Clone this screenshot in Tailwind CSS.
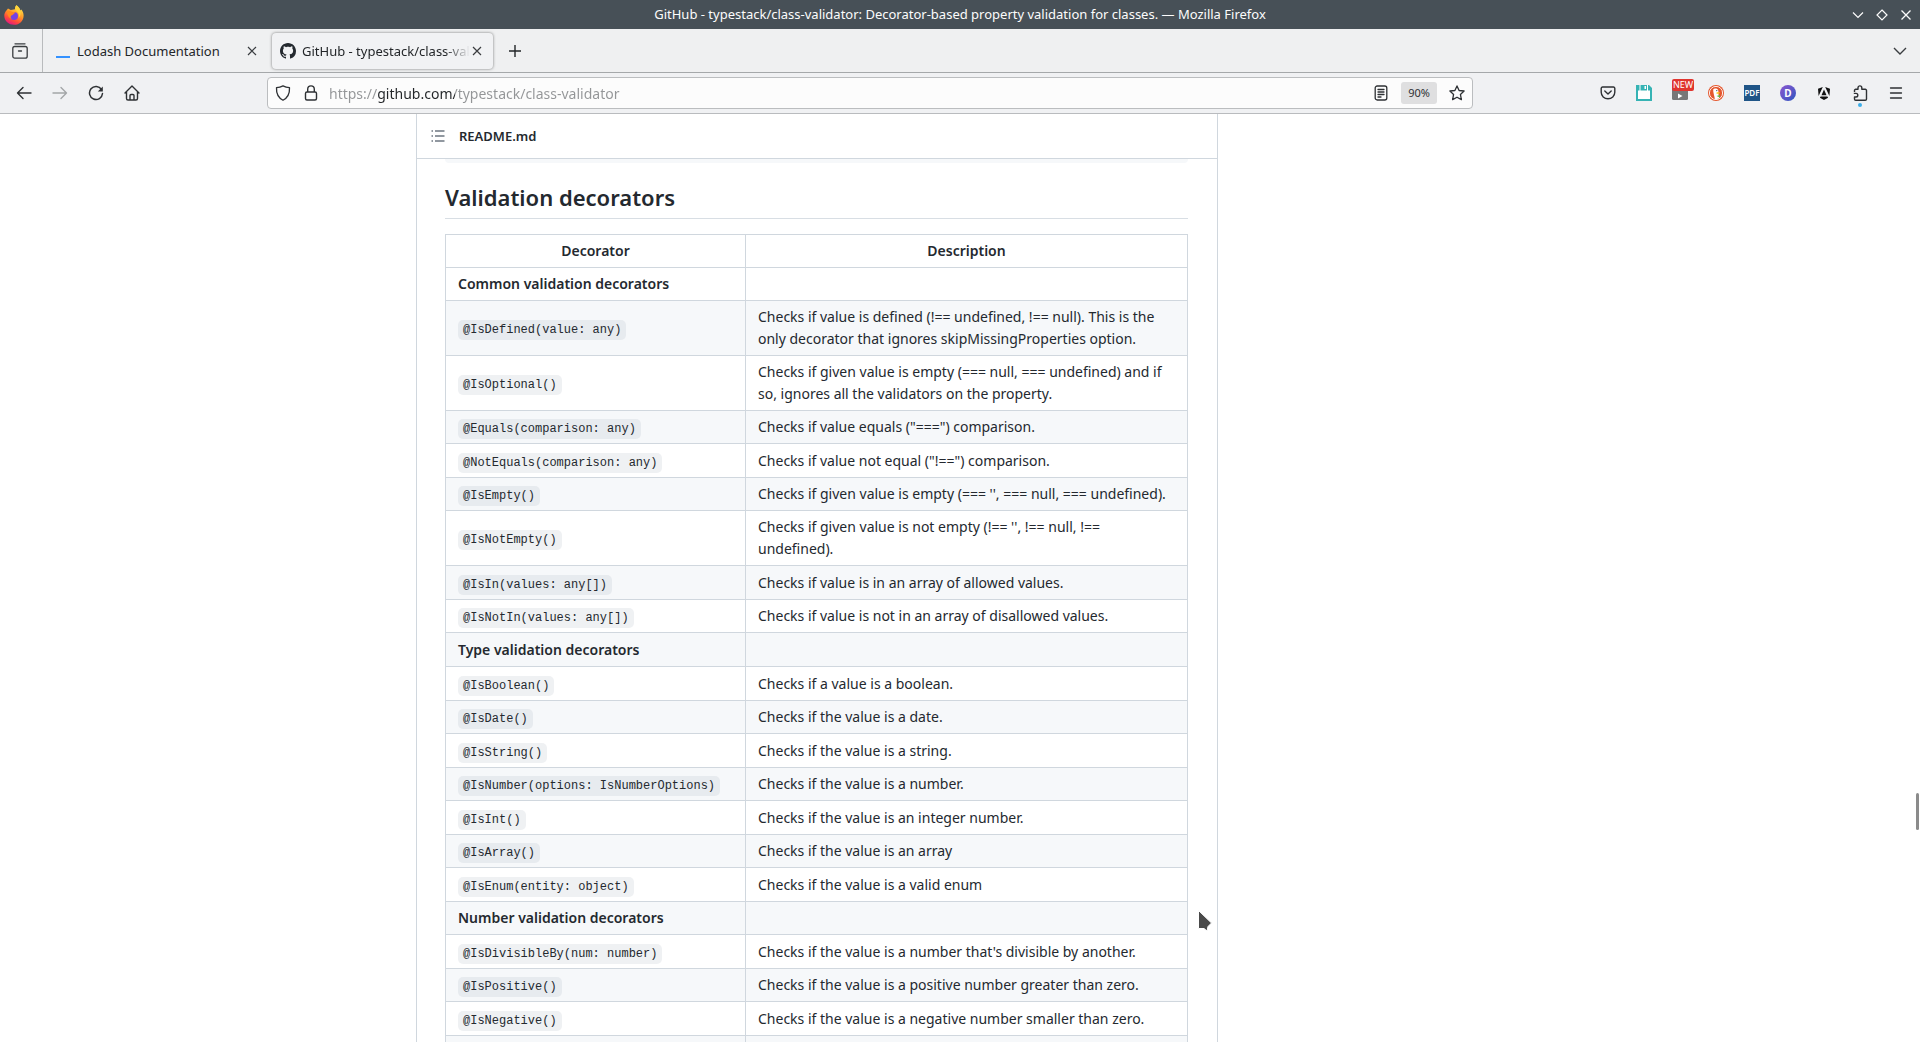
<!DOCTYPE html>
<html lang="en">
<head>
<meta charset="utf-8">
<title>GitHub - typestack/class-validator: Decorator-based property validation for classes.</title>
<script src="https://cdn.jsdelivr.net/npm/@tailwindcss/browser@4"></script>
</head>
<body class="h-screen overflow-hidden flex flex-col bg-white text-[#24292f] font-['Noto_Sans',sans-serif]">
<header class="shrink-0">
  <!-- window title bar -->
  <div class="h-[29px] bg-[#475057] text-[#fcfcfc] grid grid-cols-[1fr_auto_1fr] items-center px-1">
    <svg class="size-5" viewBox="0 0 20 20" aria-label="Firefox">
      <defs><linearGradient id="ff" x1=".8" y1="0" x2=".3" y2="1"><stop offset="0" stop-color="#fff44f"/><stop offset=".45" stop-color="#ff9a2a"/><stop offset=".75" stop-color="#ff4a3a"/><stop offset="1" stop-color="#e31587"/></linearGradient></defs>
      <path d="M12.400.2c-1 1-1.600 2.600-1.400 4L6.800 5 4 3.600 2.400 5.400C.9 7 .2 9 .3 11c.2 5 4.400 8.800 9.700 8.800 5.600 0 9.600-4.200 9.600-9.400 0-2.500-.9-4.400-2.300-6l-.8 1C15.600 2.600 14 1.200 12.400.2z" fill="url(#ff)"/>
      <circle cx="10" cy="11" r="4" fill="#7542e5"/><path d="M3 6c2-.8 4 .2 5.500 1.200 1.200-.5 2.600-.2 3.500.6-1.200 0-2 .6-2.600 1.500-.7 1-2 .8-2.600 1.900-.5 1 .3 2.200 1 2.800-2.800-.7-4.800-4-4.800-8z" fill="#ff8a1e"/><path d="M12.400.2c-1.500 2-1.800 4 .5 6 2 1.900 2.700 4 1.600 6.800 3-3 3.500-8.400-2.100-12.800z" fill="#ffd43a"/>
    </svg>
    <h1 class="text-[13px]">GitHub - typestack/class-validator: Decorator-based property validation for classes. — Mozilla Firefox</h1>
    <div class="flex justify-end gap-2 pr-[2px]">
      <button aria-label="Minimize"><svg class="size-4" viewBox="0 0 16 16" fill="none" stroke="currentColor" stroke-width="1.200"><path d="M3 5.500l5 5 5-5"/></svg></button>
      <button aria-label="Maximize"><svg class="size-4" viewBox="0 0 16 16" fill="none" stroke="currentColor" stroke-width="1.200"><path d="M8 3l5 5-5 5-5-5z"/></svg></button>
      <button aria-label="Close"><svg class="size-4" viewBox="0 0 16 16" fill="none" stroke="currentColor" stroke-width="1.300"><path d="M3.500 3.500l9 9M12.500 3.500l-9 9"/></svg></button>
    </div>
  </div>
  <!-- tab strip -->
  <div class="h-11 bg-[#eff0f1] border-b border-[#a5a8aa] flex items-center text-[#232629] text-[13px]">
    <button class="h-full w-[43px] shrink-0 border-r border-[#b9bbbd] pl-3" aria-label="Recent browsing"><svg class="size-4" viewBox="0 0 16 16" fill="none" stroke="#3a3d40" stroke-width="1.300" stroke-linecap="round"><path d="M3 .8h10"/><rect x=".8" y="3.500" width="14.400" height="11.700" rx="2"/><path d="M6.500 8h3"/></svg></button>
    <div class="w-[229px] shrink-0 flex items-center pl-[13px]">
      <span class="mt-3 w-[14px] h-[2px] bg-[#3492ff]"></span>
      <span class="ml-[7px] pt-[2px] flex-1">Lodash Documentation</span>
      <button class="mr-[14px]" aria-label="Close tab"><svg class="size-3" viewBox="0 0 12 12" fill="none" stroke="#3a3d40" stroke-width="1.200"><path d="M2 2l8 8M10 2l-8 8"/></svg></button>
    </div>
    <div class="w-[221px] h-9 shrink-0 flex items-center rounded bg-[#f1f2f4] shadow-[0_0_3px_rgba(0,0,0,0.5)] pl-2">
      <svg class="size-4 shrink-0" viewBox="0 0 16 16" fill="#24292f"><path d="M8 0C3.580 0 0 3.580 0 8c0 3.540 2.290 6.530 5.470 7.590.4.070.55-.17.550-.38 0-.19-.01-.82-.01-1.490-2.010.37-2.530-.49-2.690-.94-.09-.23-.48-.94-.82-1.130-.28-.15-.68-.52-.01-.53.63-.01 1.080.58 1.230.82.72 1.210 1.870.87 2.330.66.070-.52.280-.87.510-1.070-1.780-.2-3.640-.89-3.640-3.950 0-.87.310-1.590.82-2.150-.08-.2-.36-1.020.08-2.120 0 0 .67-.21 2.200.82.640-.18 1.320-.27 2-.27s1.360.09 2 .27c1.530-1.040 2.200-.82 2.200-.82.440 1.100.16 1.920.08 2.120.51.560.82 1.270.82 2.150 0 3.070-1.870 3.750-3.650 3.950.29.250.54.730.54 1.480 0 1.070-.01 1.930-.01 2.200 0 .21.150.46.550.38A8.010 8.010 0 0016 8c0-4.420-3.580-8-8-8z"/></svg>
      <span class="ml-[6px] pt-[2px] w-[168px] overflow-hidden whitespace-nowrap mask-r-from-85% mask-r-to-100%">GitHub - typestack/class-validator</span>
      <button class="ml-px" aria-label="Close tab"><svg class="size-3" viewBox="0 0 12 12" fill="none" stroke="#3a3d40" stroke-width="1.200"><path d="M2 2l8 8M10 2l-8 8"/></svg></button>
    </div>
    <button class="ml-[14px]" aria-label="New tab"><svg class="size-4" viewBox="0 0 16 16" fill="none" stroke="#232629" stroke-width="1.400"><path d="M8 2v12M2 8h12"/></svg></button>
    <button class="ml-auto mr-3" aria-label="List all tabs"><svg class="size-4" viewBox="0 0 16 16" fill="none" stroke="#3a3d40" stroke-width="1.400"><path d="M2 5l6 6 6-6"/></svg></button>
  </div>
  <!-- navigation toolbar -->
  <div class="h-[41px] bg-[#f0f1f3] border-b border-[#b9bbbe] flex items-center text-[#2e3134] pl-[6px] pr-[6px]">
    <nav class="flex w-[261px] shrink-0">
      <button class="w-9 flex justify-center" aria-label="Back"><svg class="size-4" viewBox="0 0 16 16" fill="none" stroke="currentColor" stroke-width="1.400" stroke-linecap="round" stroke-linejoin="round"><path d="M15 8H1.500M7 2.500L1.500 8 7 13.500"/></svg></button>
      <button class="w-9 flex justify-center text-[#a3a6a8]" aria-label="Forward" disabled><svg class="size-4" viewBox="0 0 16 16" fill="none" stroke="currentColor" stroke-width="1.400" stroke-linecap="round" stroke-linejoin="round"><path d="M1 8h13.500M9 2.500L14.500 8 9 13.500"/></svg></button>
      <button class="w-9 flex justify-center" aria-label="Reload"><svg class="size-4" viewBox="0 0 16 16" fill="none" stroke="currentColor" stroke-width="1.500" stroke-linecap="round"><path d="M13.500 4.500A6.500 6.500 0 1 0 14.500 8.500"/><path d="M14.800 1.500v5h-5z" fill="currentColor" stroke="none"/></svg></button>
      <button class="w-9 flex justify-center" aria-label="Home"><svg class="size-4" viewBox="0 0 16 16" fill="none" stroke="currentColor" stroke-width="1.400" stroke-linecap="round" stroke-linejoin="round"><path d="M1 8l7-7 7 7M2.500 7v6.500a1.500 1.500 0 0 0 1.500 1.500h8a1.500 1.500 0 0 0 1.500-1.500V7M6 15v-4.500a1 1 0 0 1 1-1h2a1 1 0 0 1 1 1V15"/></svg></button>
    </nav>
    <div class="h-8 flex-1 max-w-[1206px] flex items-center bg-[#fcfcfc] border border-[#bbbdbf] rounded pl-[7px] pr-[7px]">
      <svg class="size-4" viewBox="0 0 16 16" fill="none" stroke="currentColor" stroke-width="1.300" stroke-linejoin="round"><path d="M8 .8c2 1 4 1.600 6.500 1.900.3 5.800-1.800 10-6.500 12.500C3.300 12.700 1.200 8.500 1.500 2.700 4 2.400 6 1.800 8 .8z"/></svg>
      <svg class="ml-3 size-4" viewBox="0 0 16 16" fill="none" stroke="currentColor" stroke-width="1.400"><rect x="2.500" y="7" width="11" height="8" rx="1.500"/><path d="M4.700 7V4.200a3.300 3.300 0 0 1 6.600 0V7"/></svg>
      <input type="text" aria-label="Address" value="https://github.com/typestack/class-validator" class="ml-[10px] mr-3 flex-1 min-w-0 h-6 text-[14px] outline-none bg-clip-text text-transparent bg-[linear-gradient(90deg,#939597_49px,#232629_49px,#232629_126px,#939597_126px)]">
      <button aria-label="Reader view"><svg class="size-4" viewBox="0 0 16 16" fill="none" stroke="currentColor" stroke-width="1.300" stroke-linecap="round"><rect x="2.200" y="1" width="11.600" height="14" rx="2"/><path d="M5 4.500h6M5 7h6M5 9.500h6M5 12h3"/></svg></button>
      <button class="ml-3 h-[22px] w-9 rounded-[3px] bg-[#dfdfe0] text-[11px]">90%</button>
      <button class="ml-3" aria-label="Bookmark"><svg class="size-4" viewBox="0 0 16 16" fill="none" stroke="currentColor" stroke-width="1.300" stroke-linejoin="round"><path d="M8 .9l2.100 4.600 5 .5-3.700 3.400 1 5.200L8 12.200l-4.400 2.400 1-5.200L.9 6l5-.5z"/></svg></button>
    </div>
    <div class="ml-auto flex shrink-0">
      <button class="w-9 flex justify-center" aria-label="Pocket"><svg class="size-4" viewBox="0 0 16 16" fill="none" stroke="currentColor" stroke-width="1.400" stroke-linecap="round" stroke-linejoin="round"><path d="M2.500 2h11a1.300 1.300 0 0 1 1.300 1.300v4a6.800 6.500 0 0 1-13.600 0v-4A1.300 1.300 0 0 1 2.500 2zM4.800 6L8 9l3.200-3"/></svg></button>
      <button class="w-9 flex justify-center" aria-label="Save"><svg class="size-4" viewBox="0 0 16 16"><path d="M0 0h13l3 3v13H0z" fill="#36b3b4"/><path d="M2 5.500h12V14H2zM3.500 0h1v5.500h-1zM8.500 1H10v3H8.500zM11 0h1v5.500h-1z" fill="#fff"/></svg></button>
      <button class="relative w-9 flex justify-center" aria-label="Video extension, new"><svg class="size-4" viewBox="0 0 16 16"><rect y="2" width="16" height="13" rx="1.500" fill="#777"/><path d="M6 8.500v5l4.500-2.500z" fill="#fff"/></svg><span class="absolute left-[10px] -top-[6px] px-px h-3 rounded-[2px] bg-[#e0352f] text-white text-[9px] leading-3">NEW</span></button>
      <button class="w-9 flex justify-center" aria-label="DuckDuckGo"><svg class="size-4" viewBox="0 0 16 16"><circle cx="8" cy="8" r="8" fill="#e4572e"/><circle cx="8" cy="8" r="6.600" fill="none" stroke="#fff" stroke-width=".9"/><path d="M5.200 4.500C6 3.200 9 3 10 4.800c.6 1.200.4 2.700.4 4l.8 4.400c-1.400.9-3 1-4.400.5C6.500 11 5 7.500 5.200 4.500z" fill="#fff"/><path d="M8.500 7.600c1.500-.5 3-.3 3.500.1-.8.900-2.200 1.200-3.500 1z" fill="#fdc70b"/><path d="M8.500 11l3.500-1v2.500z" fill="#5bb847"/><circle cx="8.800" cy="5.600" r=".6" fill="#234"/></svg></button>
      <button class="w-9 flex justify-center" aria-label="PDF tool"><span class="size-4 bg-[#1f5587] text-white text-[8px] leading-4 font-semibold">PDF</span></button>
      <button class="w-9 flex justify-center" aria-label="D extension"><span class="size-4 rounded-full bg-linear-to-br from-[#8a55cf] to-[#2455c0] text-white text-[10px] leading-4 font-bold">D</span></button>
      <button class="w-9 flex justify-center" aria-label="Angular DevTools"><svg class="size-4" viewBox="0 0 16 16" fill="#111"><path d="M6.800 2L2 3.800l.6 7.200zM9.200 2L14 3.800l-.6 7.200zM8 4.500l2.500 5.800h-5zM4.600 11.500h6.800l.7 1.300L8 15l-4.100-2.200z"/></svg></button>
      <button class="relative w-9 flex justify-center" aria-label="Extensions"><svg class="size-4" viewBox="0 0 16 16" fill="none" stroke="currentColor" stroke-width="1.400" stroke-linejoin="round"><path d="M2.500 7V5.500A1.200 1.200 0 0 1 3.700 4.300H6V2.800a1.900 1.900 0 0 1 3.800 0v1.500h3.500a1.200 1.200 0 0 1 1.200 1.200v8.500a1.200 1.200 0 0 1-1.200 1.200H3.700A1.200 1.200 0 0 1 2.500 14v-2H4a1.800 1.800 0 0 0 0-3.600H1.800"/></svg><span class="absolute left-4 top-[18px] size-1 rounded-full bg-[#3daee9]"></span></button>
      <button class="w-9 flex justify-center" aria-label="Menu"><svg class="size-4" viewBox="0 0 16 16" fill="none" stroke="currentColor" stroke-width="1.300" stroke-linecap="round"><path d="M2.500 3h11M2.500 8h11M2.500 13h11"/></svg></button>
    </div>
  </div>
</header>
<main class="relative flex-1 min-h-0 overflow-hidden">
  <div class="mx-auto max-w-[1152px] px-8 flex gap-[22px]">
    <article class="flex-1 min-w-0 border-x border-[#d0d7de]">
      <div class="h-[45px] border-b border-[#d0d7de] flex items-center pl-[13px]">
        <button aria-label="Table of contents"><svg class="size-4" viewBox="0 0 16 16" fill="none" stroke="#6e7781" stroke-width="1.400"><path d="M5 3h9.500M5 8h9.500M5 13h9.500M1.500 3H3M1.500 8H3M1.500 13H3"/></svg></button>
        <a href="#readme" class="ml-[13px] pt-px text-[13px] font-semibold">README.md</a>
      </div>
      <div class="pl-7 pr-[29px]">
        <div class="h-1 rounded-b-[5px] bg-[#f6f8fa]"></div>
        <h2 id="readme" class="mt-[20px] pb-[7px] border-b border-[#d8dee4] text-[22px] leading-7 font-semibold">Validation decorators</h2>
        <table class="mt-[15px] w-full table-fixed border-collapse text-[14px] leading-[22px] [&_td]:border [&_th]:border [&_td]:border-[#d0d7de] [&_th]:border-[#d0d7de] [&_td]:px-3 [&_td]:py-[5px] [&_th]:px-3 [&_th]:py-[5px] [&_th]:font-semibold [&_tbody_tr:nth-child(even)]:bg-[#f6f8fa] [&_code]:rounded-[5px] [&_code]:bg-[#afb8c1]/20 [&_code]:px-[5px] [&_code]:py-[3px] [&_code]:text-[12px] [&_code]:leading-4 [&_code]:font-['Liberation_Mono',monospace]">
          <colgroup><col class="w-[300px]"><col></colgroup>
          <thead><tr class="h-[33px]"><th>Decorator</th><th>Description</th></tr></thead>
          <tbody>
            <tr class="h-[33px]"><td class="font-semibold">Common validation decorators</td><td></td></tr>
            <tr class="h-[55px]"><td><code>@IsDefined(value: any)</code></td><td>Checks if value is defined (!== undefined, !== null). This is the only decorator that ignores skipMissingProperties option.</td></tr>
            <tr class="h-[55px]"><td><code>@IsOptional()</code></td><td>Checks if given value is empty (=== null, === undefined) and if so, ignores all the validators on the property.</td></tr>
            <tr class="h-[33px]"><td><code>@Equals(comparison: any)</code></td><td>Checks if value equals ("===") comparison.</td></tr>
            <tr class="h-[34px]"><td><code>@NotEquals(comparison: any)</code></td><td>Checks if value not equal ("!==") comparison.</td></tr>
            <tr class="h-[33px]"><td><code>@IsEmpty()</code></td><td>Checks if given value is empty (=== '', === null, === undefined).</td></tr>
            <tr class="h-[55px]"><td><code>@IsNotEmpty()</code></td><td>Checks if given value is not empty (!== '', !== null, !== undefined).</td></tr>
            <tr class="h-[34px]"><td><code>@IsIn(values: any[])</code></td><td>Checks if value is in an array of allowed values.</td></tr>
            <tr class="h-[33px]"><td><code>@IsNotIn(values: any[])</code></td><td>Checks if value is not in an array of disallowed values.</td></tr>
            <tr class="h-[34px]"><td class="font-semibold">Type validation decorators</td><td></td></tr>
            <tr class="h-[34px]"><td><code>@IsBoolean()</code></td><td>Checks if a value is a boolean.</td></tr>
            <tr class="h-[33px]"><td><code>@IsDate()</code></td><td>Checks if the value is a date.</td></tr>
            <tr class="h-[34px]"><td><code>@IsString()</code></td><td>Checks if the value is a string.</td></tr>
            <tr class="h-[33px]"><td><code>@IsNumber(options: IsNumberOptions)</code></td><td>Checks if the value is a number.</td></tr>
            <tr class="h-[34px]"><td><code>@IsInt()</code></td><td>Checks if the value is an integer number.</td></tr>
            <tr class="h-[33px]"><td><code>@IsArray()</code></td><td>Checks if the value is an array</td></tr>
            <tr class="h-[34px]"><td><code>@IsEnum(entity: object)</code></td><td>Checks if the value is a valid enum</td></tr>
            <tr class="h-[33px]"><td class="font-semibold">Number validation decorators</td><td></td></tr>
            <tr class="h-[34px]"><td><code>@IsDivisibleBy(num: number)</code></td><td>Checks if the value is a number that's divisible by another.</td></tr>
            <tr class="h-[33px]"><td><code>@IsPositive()</code></td><td>Checks if the value is a positive number greater than zero.</td></tr>
            <tr class="h-[34px]"><td><code>@IsNegative()</code></td><td>Checks if the value is a negative number smaller than zero.</td></tr>
            <tr class="h-[33px]"><td></td><td></td></tr>
          </tbody>
        </table>
      </div>
    </article>
    <aside class="w-[264px] shrink-0"></aside>
  </div>
  <!-- scrollbar thumb and mouse pointer, over the page -->
  <div class="absolute right-[1px] top-[679px] w-[3px] h-[37px] rounded-full bg-[#8b8b8b]"></div>
  <svg class="absolute left-[1197px] top-[795px] w-4 h-6" viewBox="0 0 16 24"><path d="M1.500 1.500v18H7l3 2.500 1-4.500 3.500-3.500z" fill="#4a4a4a" stroke="#fff" stroke-width="1"/></svg>
</main>
</body>
</html>
